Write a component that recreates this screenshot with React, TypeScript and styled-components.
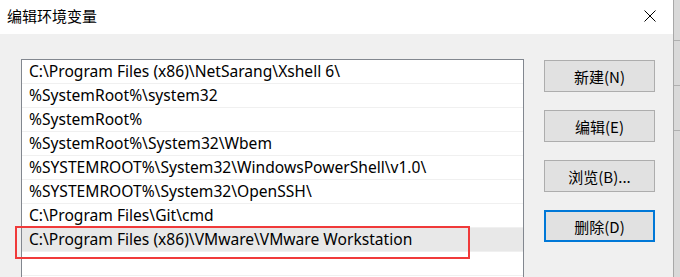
import React, { useState } from 'react';
import styled, { createGlobalStyle } from 'styled-components';

const GlobalStyle = createGlobalStyle`
  html, body {
    margin: 0;
    padding: 0;
    background: #dadada;
  }
  #root {
    width: 680px;
    height: 277px;
    overflow: hidden;
  }
`;

const paths = [
  'C:\\Program Files (x86)\\NetSarang\\Xshell 6\\',
  '%SystemRoot%\\system32',
  '%SystemRoot%',
  '%SystemRoot%\\System32\\Wbem',
  '%SYSTEMROOT%\\System32\\WindowsPowerShell\\v1.0\\',
  '%SYSTEMROOT%\\System32\\OpenSSH\\',
  'C:\\Program Files\\Git\\cmd',
  'C:\\Program Files (x86)\\VMware\\VMware Workstation',
  '',
];

const buttons = [
  { label: '新建(N)' },
  { label: '编辑(E)' },
  { label: '浏览(B)...' },
  { label: '删除(D)', focused: true },
];

export default function App() {
  const [selected, setSelected] = useState(7);

  return (
    <>
      <GlobalStyle />
      <Screen>
        <Dialog>
          <TitleBar>
            <Title>编辑环境变量</Title>
            <CloseButton aria-label="关闭">
              <svg width="12" height="12" viewBox="0 0 12 12">
                <path d="M0.5 0.5 L11.5 11.5 M11.5 0.5 L0.5 11.5" stroke="#000" strokeWidth="1" />
              </svg>
            </CloseButton>
          </TitleBar>
          <Body>
            <PathList>
              {paths.map((p, i) => (
                <PathRow key={i} $selected={i === selected} onClick={() => setSelected(i)}>
                  {p}
                </PathRow>
              ))}
            </PathList>
            <ButtonColumn>
              {buttons.map((b) => (
                <DialogButton key={b.label} $focused={b.focused}>
                  {b.label}
                </DialogButton>
              ))}
            </ButtonColumn>
          </Body>
          {/* red annotation round the VMware entry */}
          <Highlight />
        </Dialog>
        <BackWindow>
          <BackLine />
          <BackLine />
          <BackLine />
        </BackWindow>
      </Screen>
    </>
  );
}

/* ----- STYLES ----- */

const Screen = styled.div`
  display: flex;
  width: 680px;
  height: 277px;
  font-family: 'Noto Sans', 'Noto Sans CJK SC', sans-serif;
`;

const Dialog = styled.div`
  position: relative;
  width: 673px;
  display: flex;
  flex-direction: column;
  background: #f0f0f0;
  border-right: 1px solid #a8a8a8;
`;

const TitleBar = styled.div`
  height: 34px;
  background: #ffffff;
  display: flex;
  align-items: center;
  justify-content: space-between;
  padding-left: 7px;
`;

const Title = styled.div`
  font-family: 'Noto Sans CJK SC', sans-serif;
  font-size: 15px;
  color: #000;
  margin-top: -3px;
`;

const CloseButton = styled.div`
  width: 46px;
  height: 34px;
  display: flex;
  align-items: center;
  justify-content: center;
  margin-top: -3px;
`;

const Body = styled.div`
  flex: 1;
  display: flex;
  gap: 20px;
  padding: 25px 0 0 21px;
`;

const PathList = styled.div`
  width: 501px;
  background: #ffffff;
  border: 1px solid #82878f;
  border-bottom: none;
  display: flex;
  flex-direction: column;
`;

const PathRow = styled.div<{ $selected?: boolean }>`
  height: 24px;
  flex-shrink: 0;
  box-sizing: border-box;
  border-bottom: 1px solid #f0f0f0;
  background: ${(p) => (p.$selected ? '#e8e8e8' : '#ffffff')};
  padding-left: 7px;
  font-size: 15.6px;
  line-height: 23px;
  color: #000;
  white-space: nowrap;
`;

const ButtonColumn = styled.div`
  display: flex;
  flex-direction: column;
  gap: 18px;
  padding-top: 1px;
`;

const DialogButton = styled.div<{ $focused?: boolean }>`
  width: 111px;
  height: 32px;
  box-sizing: border-box;
  display: flex;
  align-items: center;
  justify-content: center;
  background: #e1e1e1;
  border: ${(p) => (p.$focused ? '2px solid #0078d7' : '1px solid #adadad')};
  font-family: 'Noto Sans CJK SC', sans-serif;
  font-size: 15px;
  color: #000;
`;

const Highlight = styled.div`
  position: absolute;
  left: 15px;
  top: 226px;
  width: 451px;
  height: 29px;
  border: 2.5px solid #f03a3a;
  pointer-events: none;
`;

const BackWindow = styled.div`
  flex: 1;
  background: #d9d9d9;
  display: flex;
  flex-direction: column;
  gap: 44px;
  padding-top: 40px;
`;

const BackLine = styled.div`
  height: 1px;
  background: #b0b0b0;
`;
